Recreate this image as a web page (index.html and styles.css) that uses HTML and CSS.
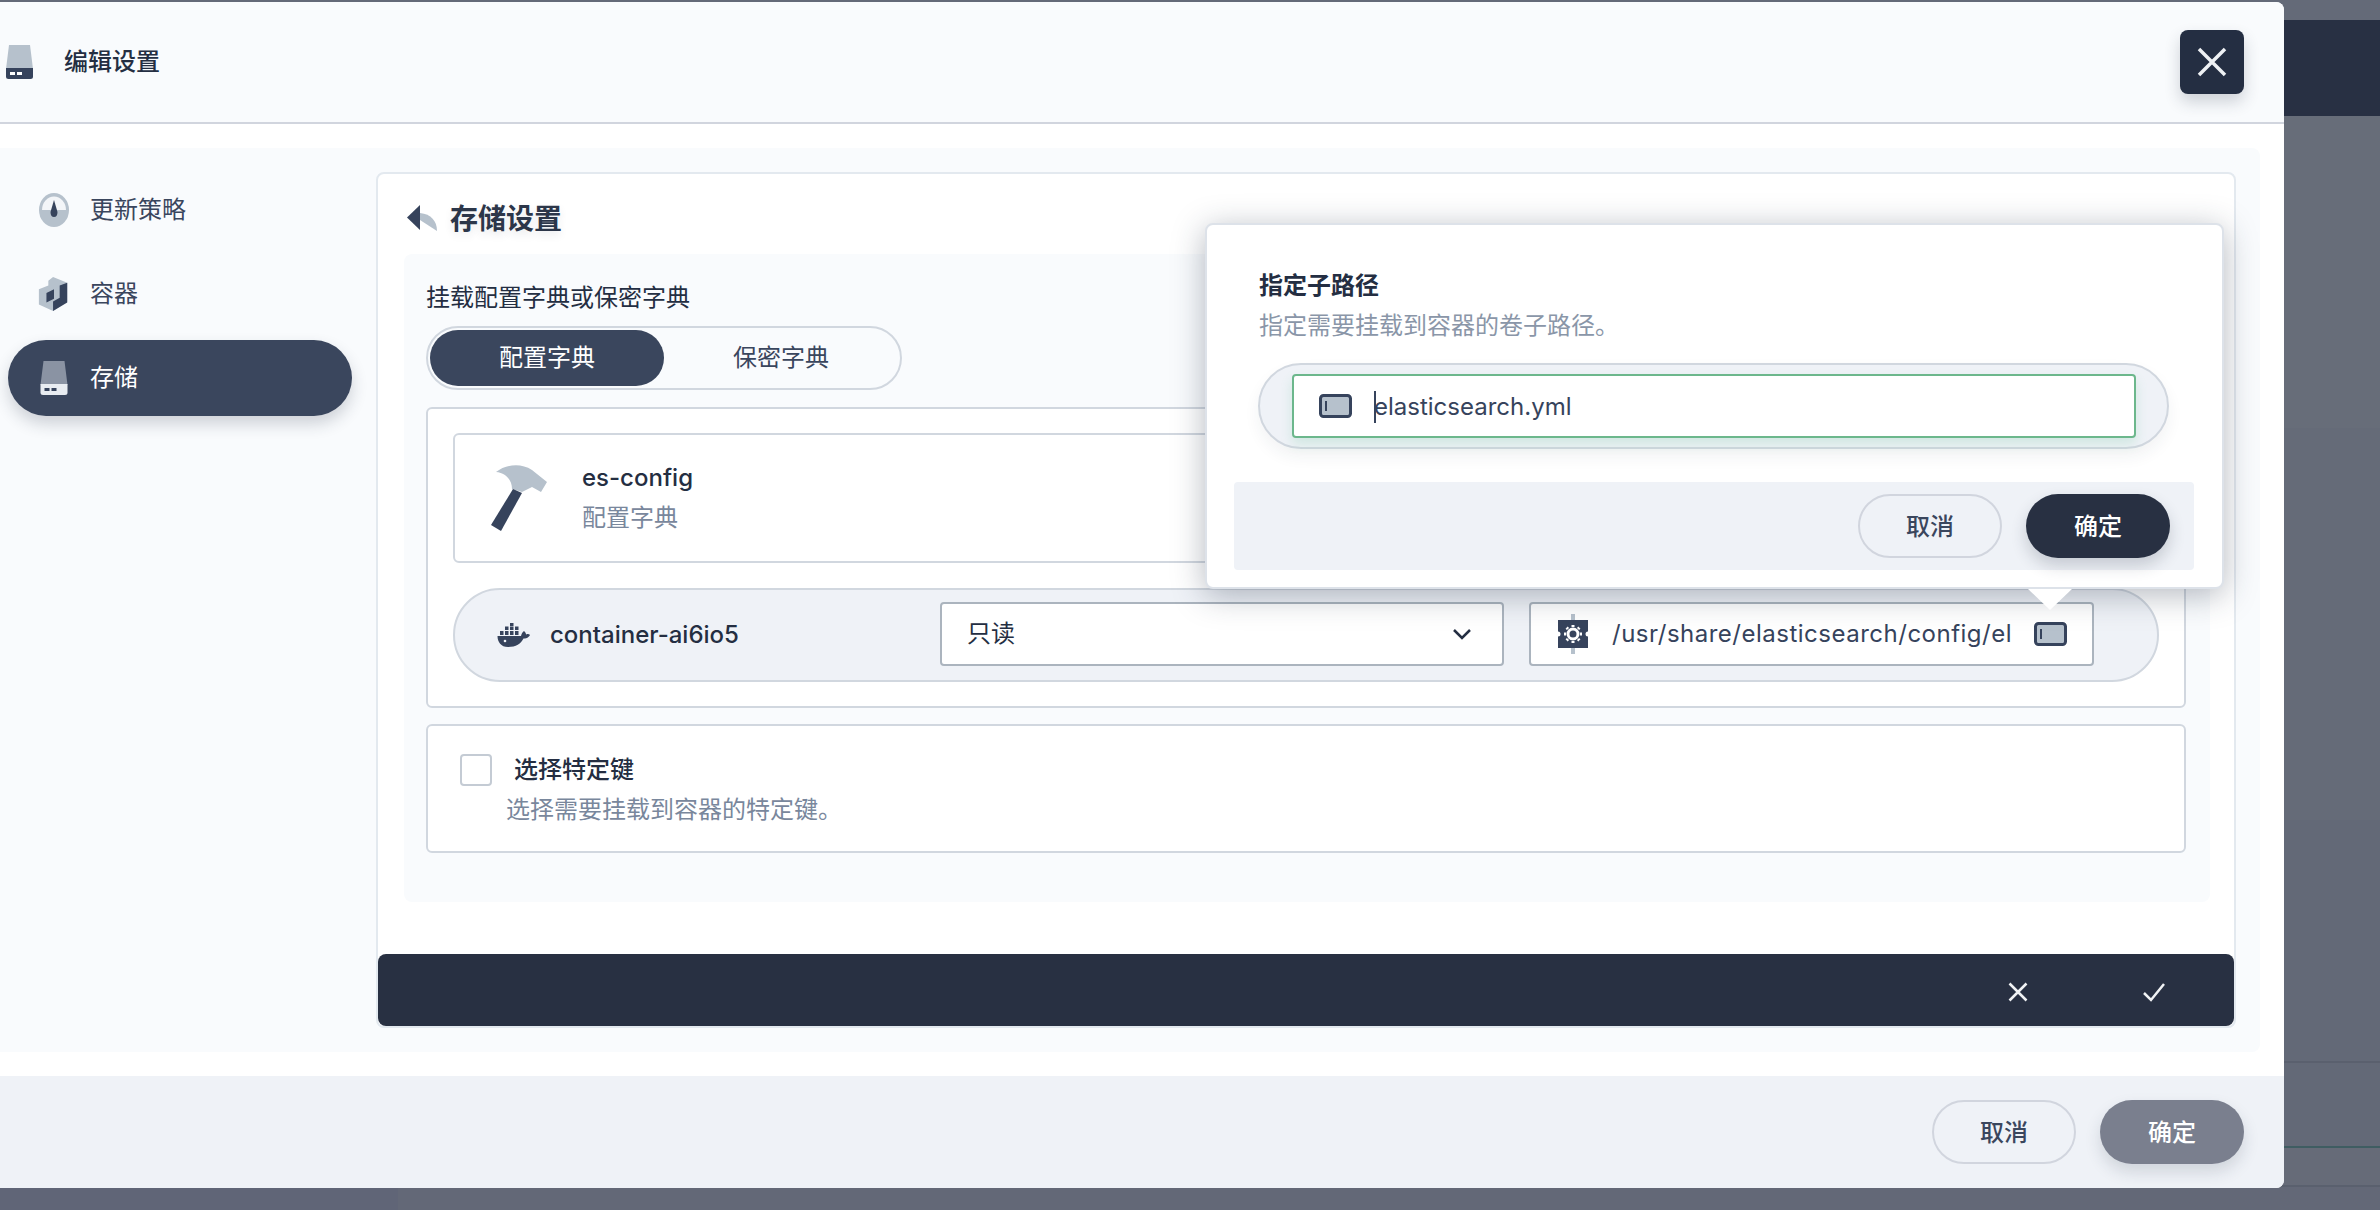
FILE: index.html
```html
<!DOCTYPE html>
<html lang="zh-CN">
<head>
    <meta charset="UTF-8">
    <meta name="viewport" content="width=device-width, initial-scale=1.0">
    <title>编辑设置</title>
    <link rel="stylesheet" href="styles.css">
</head>
<body>
    <!-- page behind the overlay -->
    <div class="backdrop">
        <div class="backdrop-bar"></div>
        <div class="band band-a"></div>
        <div class="band band-b"></div>
        <div class="band band-c"></div>
        <div class="band-line"></div>
        <div class="band band-d"></div>
        <div class="band-line band-line-green"></div>
        <div class="band band-e"></div>
        <div class="band-line"></div>
        <div class="backdrop-foot"><div class="backdrop-foot-side"></div></div>
    </div>

    <div class="modal">
        <header class="modal-header">
            <div class="modal-title">
                <svg class="icon-disk" viewBox="0 0 27 34">
                    <path class="disk-top" d="M3 0H24L27 24H0Z"/>
                    <path class="disk-base" d="M0 23H27V31.500Q27 34 24.500 34H2.500Q0 34 0 31.500Z"/>
                    <rect class="disk-slot" x="4" y="27" width="5" height="3"/>
                    <rect class="disk-slot" x="11" y="27" width="5" height="3"/>
                </svg>
                <span>编辑设置</span>
            </div>
            <button class="close-btn" type="button">
                <svg viewBox="0 0 30 30" width="30" height="30"><path d="M2 2L28 28M28 2L2 28"/></svg>
            </button>
        </header>

        <div class="modal-body">
            <div class="panel">
                <nav class="side-nav">
                    <div class="nav-item">
                        <svg class="nav-icon" viewBox="0 0 32 34">
                            <ellipse cx="16" cy="17" rx="15" ry="17" fill="#b6c1cc"/>
                            <path d="M4 17A12 13.500 0 0 1 28 17Z" fill="#f3f5f8"/>
                            <path d="M16 7L19.500 19Q19.500 24 16 24Q12.500 24 12.500 19Z" fill="#36435c"/>
                        </svg>
                        <span>更新策略</span>
                    </div>
                    <div class="nav-item">
                        <svg class="nav-icon" viewBox="0 0 32 36">
                            <path d="M15 0L30 6V26L15 36L0 29V13L10 9V4Z" fill="#b6c1cc"/>
                            <path d="M30 6L30 27L15 36V26L22 22V9Z" fill="#36435c"/>
                            <path d="M8 17L16 13V23L8 27Z" fill="#36435c"/>
                        </svg>
                        <span>容器</span>
                    </div>
                    <div class="nav-item nav-item-active">
                        <svg class="nav-icon icon-disk" viewBox="0 0 27 34">
                            <path class="disk-top" d="M3 0H24L27 24H0Z"/>
                            <path class="disk-base" d="M0 23H27V31.500Q27 34 24.500 34H2.500Q0 34 0 31.500Z"/>
                            <rect class="disk-slot" x="4" y="27" width="5" height="3"/>
                            <rect class="disk-slot" x="11" y="27" width="5" height="3"/>
                        </svg>
                        <span>存储</span>
                    </div>
                </nav>

                <div class="card">
                    <div class="card-title">
                        <svg class="icon-back" viewBox="0 0 30 26">
                            <path d="M30 26C30 16 24 9 13 8V15Z" fill="#b6c1cc"/>
                            <path d="M13 0V25L0 12.500Z" fill="#36435c"/>
                        </svg>
                        <h2>存储设置</h2>
                    </div>

                    <div class="section">
                        <div class="field-label">挂载配置字典或保密字典</div>
                        <div class="tabs">
                            <div class="tab tab-active">配置字典</div>
                            <div class="tab">保密字典</div>
                        </div>

                        <div class="box">
                            <div class="resource">
                                <svg class="icon-hammer" viewBox="30 24 58 68">
                                    <path d="M36 32C45 25 60 22 72 30L87 42L81 52L72 47L62 52L52 49C52 40 46 33 36 32Z" fill="#b6c1cc"/>
                                    <path d="M53 49L62 53L41 91L31 85Z" fill="#36435c"/>
                                </svg>
                                <div>
                                    <div class="resource-name">es-config</div>
                                    <div class="resource-type">配置字典</div>
                                </div>
                            </div>

                            <div class="mount-row">
                                <div class="mount-name">
                                    <svg class="icon-docker" viewBox="0 0 33 24">
                                        <path d="M0.500 13H24C24.500 10.500 26 8.500 27 8C28 9 29 10 29 11.500C30 10.500 32 11 33 12C31.500 15 28.500 15.500 26.500 15.500C24 20.500 19 24 11 24C4 24 0.500 19 0.500 13Z" fill="#36435c"/>
                                        <path d="M3 8H6.500V12H3ZM8 8H11.500V12H8ZM13 8H16.500V12H13ZM18 8H21.500V12H18ZM8 3.500H11.500V7H8ZM13 3.500H16.500V7H13ZM18 3.500H21.500V7H18ZM13 0H16.500V3H13Z" fill="#36435c"/>
                                        <circle cx="8" cy="18" r="1.300" fill="#eff2f7"/>
                                    </svg>
                                    <span>container-ai6io5</span>
                                </div>
                                <div class="select">
                                    <span>只读</span>
                                    <svg viewBox="0 0 20 12" width="20" height="12"><path d="M2 2L10 10L18 2"/></svg>
                                </div>
                                <div class="path-input">
                                    <svg class="icon-gear" viewBox="0 0 30 40">
                                        <rect x="13" y="0" width="4" height="40" fill="#b6c1cc"/>
                                        <rect x="0" y="6" width="30" height="28" fill="#36435c"/>
                                        <circle cx="0" cy="20" r="2.500" fill="#fff"/>
                                        <circle cx="30" cy="20" r="2.500" fill="#fff"/>
                                        <circle cx="15" cy="20" r="5" fill="none" stroke="#fff" stroke-width="3"/>
                                        <path d="M15 11V13M15 27V29M6 20H8M22 20H24M8.600 13.600L10 15M20 25L21.400 26.400M21.400 13.600L20 15M10 25L8.600 26.400" stroke="#fff" stroke-width="3"/>
                                    </svg>
                                    <span class="path-text">/usr/share/elasticsearch/config/el</span>
                                    <svg class="icon-key" viewBox="0 0 33 24">
                                        <rect x="1.500" y="1.500" width="30" height="21" rx="3" fill="#b6c1cc" stroke="#36435c" stroke-width="3"/>
                                        <rect x="6" y="7" width="2" height="10" fill="#36435c"/>
                                    </svg>
                                </div>
                            </div>
                        </div>

                        <div class="box box-keys">
                            <label class="check-row">
                                <span class="checkbox"></span>
                                <span class="check-title">选择特定键</span>
                            </label>
                            <div class="check-desc">选择需要挂载到容器的特定键。</div>
                        </div>
                    </div>

                    <div class="card-bar">
                        <button class="bar-btn" type="button">
                            <svg viewBox="0 0 20 20" width="20" height="20"><path d="M1.500 1.500L18.500 18.500M18.500 1.500L1.500 18.500"/></svg>
                        </button>
                        <button class="bar-btn" type="button">
                            <svg viewBox="0 0 22 20" width="22" height="20"><path d="M1 11L8 18L21 2"/></svg>
                        </button>
                    </div>
                </div>
            </div>
        </div>

        <footer class="modal-footer">
            <button class="btn" type="button">取消</button>
            <button class="btn btn-muted" type="button">确定</button>
        </footer>

        <!-- sub path popover, opened from the key icon -->
        <div class="popover">
            <div class="popover-title">指定子路径</div>
            <div class="popover-desc">指定需要挂载到容器的卷子路径。</div>
            <div class="popover-field">
                <div class="popover-input">
                    <svg class="icon-key" viewBox="0 0 33 24">
                        <rect x="1.500" y="1.500" width="30" height="21" rx="3" fill="#b6c1cc" stroke="#36435c" stroke-width="3"/>
                        <rect x="6" y="7" width="2" height="10" fill="#36435c"/>
                    </svg>
                    <span class="popover-value">elasticsearch.yml</span>
                </div>
            </div>
            <div class="popover-footer">
                <button class="btn" type="button">取消</button>
                <button class="btn btn-dark" type="button">确定</button>
            </div>
            <div class="popover-arrow"></div>
        </div>
    </div>
</body>
</html>
```
FILE: styles.css
```css
* {
    box-sizing: border-box;
}

body {
    margin: 0;
    height: 1210px;
    overflow: hidden;
    position: relative;
    background-color: #646a78;
    font-family: Inter, "Noto Sans CJK SC", sans-serif;
    font-size: 24px;
    line-height: 32px;
    color: #242e42;
}

button {
    font-family: inherit;
    cursor: pointer;
}

svg {
    display: block;
    flex-shrink: 0;
}

/* page behind the overlay */
.backdrop {
    height: 1210px;
    padding-top: 20px;
    display: flex;
    flex-direction: column;
}

.backdrop-bar {
    height: 96px;
    background-color: #283043;
}

.band-a { height: 312px; background-color: #676d79; }
.band-b { height: 392px; background-color: #656b78; }
.band-c { height: 241px; background-color: #636977; }
.band-d { height: 83px; background-color: #636977; }
.band-e { height: 37px; background-color: #666b78; }

.band-line {
    height: 2px;
    background-color: #5a606e;
}

.band-line-green {
    background-color: #3f5d62;
}

.backdrop-foot {
    flex: 1;
    background-color: #636877;
}

.backdrop-foot-side {
    width: 398px;
    height: 100%;
    background-color: #606577;
}

/* modal */
.modal {
    position: absolute;
    top: 2px;
    left: 0;
    width: 2284px;
    height: 1186px;
    display: flex;
    flex-direction: column;
    background-color: #fff;
    border-radius: 0 8px 8px 0;
}

.modal-header {
    height: 122px;
    flex-shrink: 0;
    display: flex;
    align-items: center;
    justify-content: space-between;
    padding: 0 40px 0 6px;
    background-color: #f9fbfd;
    border-bottom: 2px solid #d1d5de;
    border-radius: 0 8px 0 0;
}

.modal-title {
    display: flex;
    align-items: center;
    gap: 31px;
    font-weight: 500;
}

.icon-disk {
    width: 27px;
    height: 34px;
}

.disk-top { fill: #b6c1cc; }
.disk-base { fill: #36435c; }
.disk-slot { fill: #fff; }

.nav-item-active .disk-top { fill: #8a93a3; }
.nav-item-active .disk-base { fill: #e8ecf1; }
.nav-item-active .disk-slot { fill: #36435c; }

.close-btn {
    width: 64px;
    height: 64px;
    padding: 0;
    border: none;
    border-radius: 8px;
    background-color: #242e42;
    box-shadow: 0 8px 16px rgba(36, 46, 66, 0.2);
    display: flex;
    align-items: center;
    justify-content: center;
}

.close-btn path {
    stroke: #eef1f4;
    stroke-width: 3.5;
    fill: none;
}

.modal-body {
    flex: 1;
    padding: 24px 24px 24px 0;
    display: flex;
    min-height: 0;
}

.panel {
    flex: 1;
    display: flex;
    padding: 24px 24px 24px 0;
    background-color: #f9fbfd;
    border-radius: 0 8px 8px 0;
}

/* left nav */
.side-nav {
    width: 376px;
    flex-shrink: 0;
    padding-left: 8px;
    padding-right: 24px;
    display: flex;
    flex-direction: column;
    gap: 8px;
}

.nav-item {
    height: 76px;
    padding-left: 30px;
    display: flex;
    align-items: center;
    gap: 20px;
    border-radius: 38px;
    color: #3a465d;
}

.nav-icon {
    width: 32px;
    height: 34px;
}

.nav-item-active {
    background-color: #3a465d;
    color: #fff;
    box-shadow: 0 8px 16px rgba(36, 46, 66, 0.2);
}

.nav-item-active .icon-disk {
    width: 32px;
}

/* main card */
.card {
    flex: 1;
    min-width: 0;
    display: flex;
    flex-direction: column;
    background-color: #fff;
    border: 2px solid #e3e9ef;
    border-radius: 8px;
}

.card-title {
    height: 80px;
    flex-shrink: 0;
    padding: 10px 0 0 29px;
    display: flex;
    align-items: center;
    gap: 13px;
}

.icon-back {
    width: 30px;
    height: 26px;
    margin-top: -2px;
}

.card-title h2 {
    margin: 0;
    font-size: 28px;
    line-height: 36px;
    font-weight: 700;
    color: #2c3649;
    text-shadow: 0 4px 8px rgba(36, 46, 66, 0.1);
}

.section {
    height: 648px;
    margin: 0 24px 0 26px;
    padding: 28px 24px 0 22px;
    background-color: #f9fbfd;
    border-radius: 8px;
}

.field-label {
    height: 32px;
    margin-bottom: 12px;
}

.tabs {
    width: 476px;
    height: 64px;
    padding: 2px;
    margin-bottom: 17px;
    display: flex;
    border: 2px solid #d1d7df;
    border-radius: 32px;
    color: #3a465d;
}

.tab {
    flex: 1;
    display: flex;
    align-items: center;
    justify-content: center;
    border-radius: 28px;
}

.tab-active {
    background-color: #3a465d;
    color: #fff;
}

.box {
    padding: 24px 25px;
    background-color: #fff;
    border: 2px solid #d1d7df;
    border-radius: 6px;
}

.resource {
    height: 130px;
    padding-left: 35px;
    display: flex;
    align-items: center;
    gap: 34px;
    border: 2px solid #d1d7df;
    border-radius: 6px;
}

.icon-hammer {
    width: 58px;
    height: 68px;
}

.resource-name {
    line-height: 40px;
    font-weight: 500;
}

.resource-type {
    line-height: 40px;
    color: #79879c;
}

.mount-row {
    height: 94px;
    margin-top: 25px;
    display: flex;
    align-items: center;
    padding-right: 63px;
    background-color: #eff2f7;
    border: 2px solid #d1d7df;
    border-radius: 47px;
}

.mount-name {
    flex: 1;
    padding-left: 42px;
    display: flex;
    align-items: center;
    gap: 20px;
    font-weight: 500;
}

.icon-docker {
    width: 33px;
    height: 24px;
}

.select {
    width: 564px;
    height: 64px;
    margin-right: 25px;
    margin-bottom: 2px;
    padding: 0 30px 0 25px;
    display: flex;
    align-items: center;
    justify-content: space-between;
    background-color: #fff;
    border: 2px solid #abb4be;
    border-radius: 4px;
}

.select path {
    fill: none;
    stroke: #242e42;
    stroke-width: 2.500;
}

.path-input {
    width: 565px;
    height: 64px;
    margin-bottom: 2px;
    padding: 0 25px 0 27px;
    display: flex;
    align-items: center;
    gap: 24px;
    background-color: #fff;
    border: 2px solid #abb4be;
    border-radius: 4px;
    color: #36435c;
}

.icon-gear {
    width: 30px;
    height: 40px;
}

.path-text {
    flex: 1;
    min-width: 0;
    white-space: nowrap;
    letter-spacing: 0.5px;
}

.icon-key {
    width: 33px;
    height: 24px;
}

.box-keys {
    height: 129px;
    margin-top: 16px;
    padding: 28px 32px 0;
}

.check-row {
    display: flex;
    align-items: center;
    gap: 22px;
    height: 32px;
}

.checkbox {
    width: 32px;
    height: 32px;
    background-color: #fff;
    border: 2px solid #c4cbd4;
    border-radius: 4px;
}

.check-title {
    font-weight: 500;
}

.check-desc {
    margin-top: 8px;
    padding-left: 46px;
    color: #79879c;
}

.card-bar {
    height: 72px;
    margin-top: auto;
    padding: 4px 12px 0 0;
    display: flex;
    justify-content: flex-end;
    background-color: #283042;
    border-radius: 8px;
}

.bar-btn {
    width: 136px;
    padding: 0;
    border: none;
    background: none;
    display: flex;
    align-items: center;
    justify-content: center;
}

.bar-btn path {
    fill: none;
    stroke: #f1f3f5;
    stroke-width: 2.500;
}

/* buttons */
.modal-footer {
    height: 112px;
    flex-shrink: 0;
    padding: 24px 40px 0 0;
    display: flex;
    justify-content: flex-end;
    gap: 24px;
    background-color: #eff2f7;
    border-radius: 0 0 8px 0;
}

.btn {
    width: 144px;
    height: 64px;
    padding: 0 0 3px;
    font-size: 24px;
    font-weight: 500;
    color: #3a465d;
    background: none;
    border: 2px solid #d1d5de;
    border-radius: 32px;
}

.btn-muted {
    color: #fff;
    background-color: #7a7f8e;
    border: none;
    box-shadow: 0 8px 16px rgba(36, 46, 66, 0.15);
}

.btn-dark {
    color: #fff;
    background-color: #283042;
    border: none;
    box-shadow: 0 8px 16px rgba(36, 46, 66, 0.2);
}

/* popover */
.popover {
    position: absolute;
    left: 1205px;
    top: 221px;
    width: 1019px;
    height: 366px;
    padding-top: 45px;
    background-color: #fff;
    border: 2px solid #dde2e9;
    border-radius: 8px;
    box-shadow: 0 6px 32px rgba(36, 46, 66, 0.34);
}

.popover-title {
    margin-left: 52px;
    font-weight: 700;
    height: 32px;
}

.popover-desc {
    margin: 8px 0 0 52px;
    height: 32px;
    color: #8a96a8;
}

.popover-field {
    width: 911px;
    height: 86px;
    margin: 21px 0 0 51px;
    padding: 9px 31px 0 32px;
    background-color: #eff2f7;
    border: 2px solid #d1d7df;
    border-radius: 43px;
    box-shadow: 0 8px 16px rgba(36, 46, 66, 0.06);
}

.popover-input {
    height: 64px;
    padding-left: 25px;
    display: flex;
    align-items: center;
    gap: 22px;
    background-color: #fff;
    border: 2px solid #6cb78c;
    border-radius: 4px;
    box-shadow: 0 6px 12px rgba(85, 188, 138, 0.2);
}

.popover-value {
    margin-top: 2px;
    color: #36435c;
    border-left: 2px solid #36435c;
    text-indent: -2px;
}

.popover-footer {
    height: 88px;
    margin: 33px 28px 0 27px;
    padding-right: 24px;
    display: flex;
    align-items: center;
    justify-content: flex-end;
    gap: 24px;
    background-color: #eff2f7;
    border-radius: 4px;
}

.popover-arrow {
    position: absolute;
    left: 821px;
    bottom: -23px;
    width: 0;
    height: 0;
    border-left: 22px solid transparent;
    border-right: 22px solid transparent;
    border-top: 21px solid #fff;
}
```
